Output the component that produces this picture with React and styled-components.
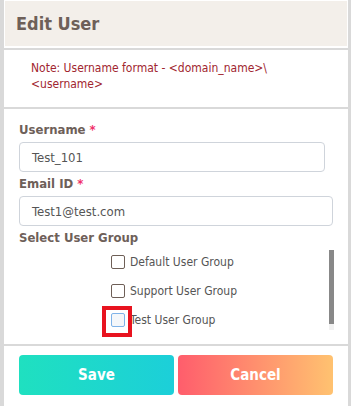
import styled, { createGlobalStyle } from 'styled-components';

const GlobalStyle = createGlobalStyle`
    html, body {
        margin: 0;
        padding: 0;
        background: #d9d9d9;
        font-family: "DejaVu Sans Condensed", "DejaVu Sans", "Liberation Sans", sans-serif;
    }
`;

const Panel = styled.div`
    margin: 0 3px 0 4px;
    height: 406px;
    background: #ffffff;
    padding-top: 1px;
    box-sizing: border-box;
    display: flex;
    flex-direction: column;
`;

const Header = styled.div`
    height: 45px;
    margin: 0 1px 2px 1px;
    background: #f3efea;
    display: flex;
    align-items: center;
    padding-left: 11px;
`;

const Title = styled.h2`
    margin: 0;
    font-size: 18px;
    font-weight: bold;
    color: #6e6059;
`;

const Divider = styled.div`
    height: 2px;
    background: #d9d9d9;
    flex-shrink: 0;
`;

const NoteSection = styled.div`
    height: 57px;
    box-sizing: border-box;
    padding: 10px 20px 0 27px;
`;

const Note = styled.p`
    margin: 0;
    font-size: 12px;
    line-height: 16px;
    color: #a1262f;
`;

const Form = styled.div`
    height: 235px;
    box-sizing: border-box;
    padding: 13px 15px 0 15px;
`;

const Label = styled.div`
    font-size: 13px;
    line-height: 16px;
    font-weight: bold;
    color: #6e6059;
    margin-bottom: ${({ gap }) => gap}px;
`;

const Star = styled.span`
    color: #f0306a;
`;

const Input = styled.div`
    width: ${({ short }) => (short ? 'calc(100% - 8px)' : '100%')};
    height: 30px;
    box-sizing: border-box;
    border: 1px solid #cfd4db;
    border-radius: 4px;
    padding-left: 12px;
    display: flex;
    align-items: center;
    font-size: 13px;
    color: #555555;
    margin-bottom: 4px;
`;

const GroupArea = styled.div`
    display: flex;
    width: 315px;
    height: 80px;
`;

const GroupList = styled.div`
    flex: 1;
    padding-left: 92px;
    display: flex;
    flex-direction: column;
    gap: 5px;
`;

const ScrollTrack = styled.div`
    width: 5px;
    background: #f1f1f1;
    display: flex;
    flex-direction: column;
`;

const ScrollThumb = styled.div`
    height: 74px;
    background: #888888;
`;

const Group = styled.div`
    height: 24px;
    flex-shrink: 0;
    display: flex;
    align-items: center;
    gap: 5px;
    position: relative;
    font-size: 12px;
    color: #555555;
`;

const Box = styled.span`
    width: 14px;
    height: 14px;
    box-sizing: border-box;
    border-radius: 2px;
    border: 1px solid ${({ focus }) => (focus ? '#7fb3e8' : '#6e5f57')};
    background: ${({ focus }) => (focus ? '#f4f7fa' : '#ffffff')};
    flex-shrink: 0;
`;

const Highlight = styled.span`
    position: absolute;
    left: -9px;
    top: -2px;
    width: 30px;
    height: 31px;
    box-sizing: border-box;
    border: 4px solid #e8131f;
`;

const Footer = styled.div`
    flex: 1;
    display: flex;
    gap: 4px;
    padding: 9px 15px 0 15px;
`;

const Button = styled.button`
    flex: 1;
    height: 40px;
    border: none;
    border-radius: 4px;
    color: #ffffff;
    font-family: inherit;
    font-size: 15px;
    font-weight: bold;
    background: ${({ kind }) =>
        kind === 'save'
            ? 'linear-gradient(to right, #1fe0c0, #1ccfd9)'
            : 'linear-gradient(to right, #ff5d6c, #ffc270)'};
`;

const groups = ['Default User Group', 'Support User Group', 'Test User Group'];

const App = () => {
    return (
        <>
            <GlobalStyle />
            <Panel>
                <Header>
                    <Title>Edit User</Title>
                </Header>
                <Divider />
                <NoteSection>
                    <Note>Note: Username format - &lt;domain_name&gt;\ &lt;username&gt;</Note>
                </NoteSection>
                <Divider />
                <Form>
                    <Label gap={4}>Username <Star>*</Star></Label>
                    <Input short>Test_101</Input>
                    <Label gap={4}>Email ID <Star>*</Star></Label>
                    <Input>Test1@test.com</Input>
                    <Label gap={4}>Select User Group</Label>
                    <GroupArea>
                        <GroupList>
                            {groups.map((g, i) => (
                                <Group key={g}>
                                    <Box focus={i === 2} />
                                    {g}
                                    {i === 2 && <Highlight />}
                                </Group>
                            ))}
                        </GroupList>
                        <ScrollTrack>
                            <ScrollThumb />
                        </ScrollTrack>
                    </GroupArea>
                </Form>
                <Divider />
                <Footer>
                    <Button kind="save">Save</Button>
                    <Button kind="cancel">Cancel</Button>
                </Footer>
            </Panel>
        </>
    );
};

export default App;
